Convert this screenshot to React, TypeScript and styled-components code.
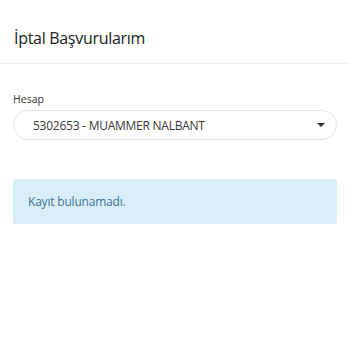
import styled, { createGlobalStyle } from "styled-components";

const GlobalStyle = createGlobalStyle`
  body {
    margin: 0;
    background: #fff;
    font-family: "Open Sans", "Noto Sans", sans-serif;
    color: #333;
  }
`;

const Page = styled.div`
  width: 350px;
`;

const Header = styled.header`
  height: 64px;
  display: flex;
  align-items: center;
  padding: 0 14px;
  box-sizing: border-box;
  border-bottom: 1px solid #eeeeee;
`;

const Title = styled.h1`
  margin: 0;
  font-size: 16px;
  line-height: 20px;
  letter-spacing: -0.3px;
  font-weight: 400;
  color: #222;
  padding-top: 12px;
`;

const Content = styled.main`
  padding: 28px 13px 0;
`;

const Label = styled.label`
  display: block;
  font-size: 10.5px;
  line-height: 14px;
  color: #333;
  margin-bottom: 4px;
`;

const SelectBox = styled.div`
  height: 30px;
  box-sizing: border-box;
  border: 1px solid #e4e4e4;
  border-radius: 15px;
  display: flex;
  align-items: center;
  padding: 0 11px 0 19px;
  font-size: 12px;
  letter-spacing: -0.25px;
  color: #3a3a3a;
`;

const SelectText = styled.span`
  flex: 1;
`;

const Caret = styled.span`
  width: 0;
  height: 0;
  border-left: 4px solid transparent;
  border-right: 4px solid transparent;
  border-top: 4px solid #333;
`;

const Alert = styled.div`
  margin-top: 39px;
  height: 45px;
  box-sizing: border-box;
  background: #d9edf7;
  border-radius: 3px;
  color: #3f7596;
  font-size: 12px;
  letter-spacing: -0.2px;
  display: flex;
  align-items: center;
  padding: 0 15px;
`;

export default function App() {
  return (
    <Page>
      <GlobalStyle />
      <Header>
        <Title>İptal Başvurularım</Title>
      </Header>
      <Content>
        <Label>Hesap</Label>
        <SelectBox>
          <SelectText>5302653 - MUAMMER NALBANT</SelectText>
          <Caret />
        </SelectBox>
        <Alert>Kayıt bulunamadı.</Alert>
      </Content>
    </Page>
  );
}
